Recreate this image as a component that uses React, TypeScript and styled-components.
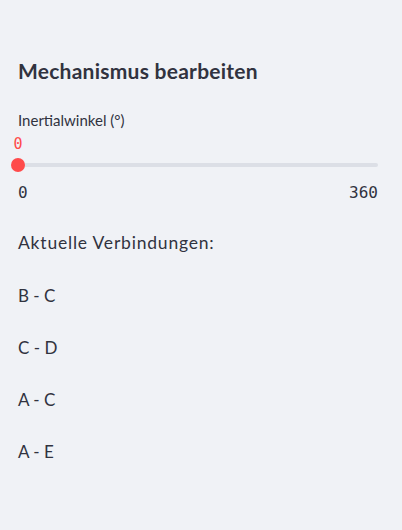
import * as React from 'react';
import styled, { createGlobalStyle } from 'styled-components';

const GlobalStyle = createGlobalStyle`
  html, body {
    margin: 0;
    padding: 0;
    background: #f0f2f6;
  }
  body {
    font-family: Lato, 'Noto Sans', sans-serif;
    color: #31333f;
  }
`;

const Sidebar = styled.div`
  width: 402px;
  height: 530px;
  box-sizing: border-box;
  padding: 57px 24px 0 18px;
  display: flex;
  flex-direction: column;
  background: #f0f2f6;
`;

const Heading = styled.h3`
  margin: 0;
  font-size: 21px;
  line-height: 28px;
  font-weight: 700;
  letter-spacing: 0.25px;
`;

const Label = styled.div`
  margin-top: 25px;
  font-size: 15px;
  line-height: 20px;
`;

const SliderBlock = styled.div`
  margin-top: 4px;
  display: flex;
  flex-direction: column;
`;

const ValueRow = styled.div`
  position: relative;
  height: 21px;
`;

const Value = styled.span`
  position: absolute;
  top: 0;
  transform: translateX(-50%);
  font-family: 'DejaVu Sans Mono', monospace;
  font-size: 15px;
  line-height: 21px;
  color: #ff4b4b;
`;

const TrackRow = styled.div`
  position: relative;
  height: 20px;
  display: flex;
  align-items: center;
`;

const Track = styled.div`
  flex: 1;
  height: 4px;
  border-radius: 2px;
  background: #dcdfe6;
`;

const Thumb = styled.div`
  position: absolute;
  top: 3px;
  width: 14px;
  height: 14px;
  border-radius: 50%;
  background: #ff4b4b;
  transform: translateX(-50%);
`;

const Ticks = styled.div`
  margin-top: 8px;
  display: flex;
  justify-content: space-between;
  font-family: 'DejaVu Sans Mono', monospace;
  font-size: 16px;
  line-height: 20px;
`;

const Subtitle = styled.p`
  margin: 27px 0 0;
  font-size: 17.5px;
  line-height: 26px;
  letter-spacing: 0.8px;
`;

const List = styled.div`
  margin-top: 27px;
  display: flex;
  flex-direction: column;
  gap: 26px;
`;

const Item = styled.p`
  margin: 0;
  font-size: 17px;
  line-height: 26px;
`;

const connections = ['B - C', 'C - D', 'A - C', 'A - E'];

export default function App() {
  const min = 0;
  const max = 360;
  const value = 0;
  const pct = ((value - min) / (max - min)) * 100;
  return (
    <>
      <GlobalStyle />
      <Sidebar>
        <Heading>Mechanismus bearbeiten</Heading>
        <Label>Inertialwinkel (°)</Label>
        <SliderBlock>
          <ValueRow>
            <Value style={{ left: `${pct}%` }}>{value}</Value>
          </ValueRow>
          <TrackRow>
            <Track />
            <Thumb style={{ left: `${pct}%` }} />
          </TrackRow>
          <Ticks>
            <span>{min}</span>
            <span>{max}</span>
          </Ticks>
        </SliderBlock>
        <Subtitle>Aktuelle Verbindungen:</Subtitle>
        <List>
          {connections.map((c) => (
            <Item key={c}>{c}</Item>
          ))}
        </List>
      </Sidebar>
    </>
  );
}
